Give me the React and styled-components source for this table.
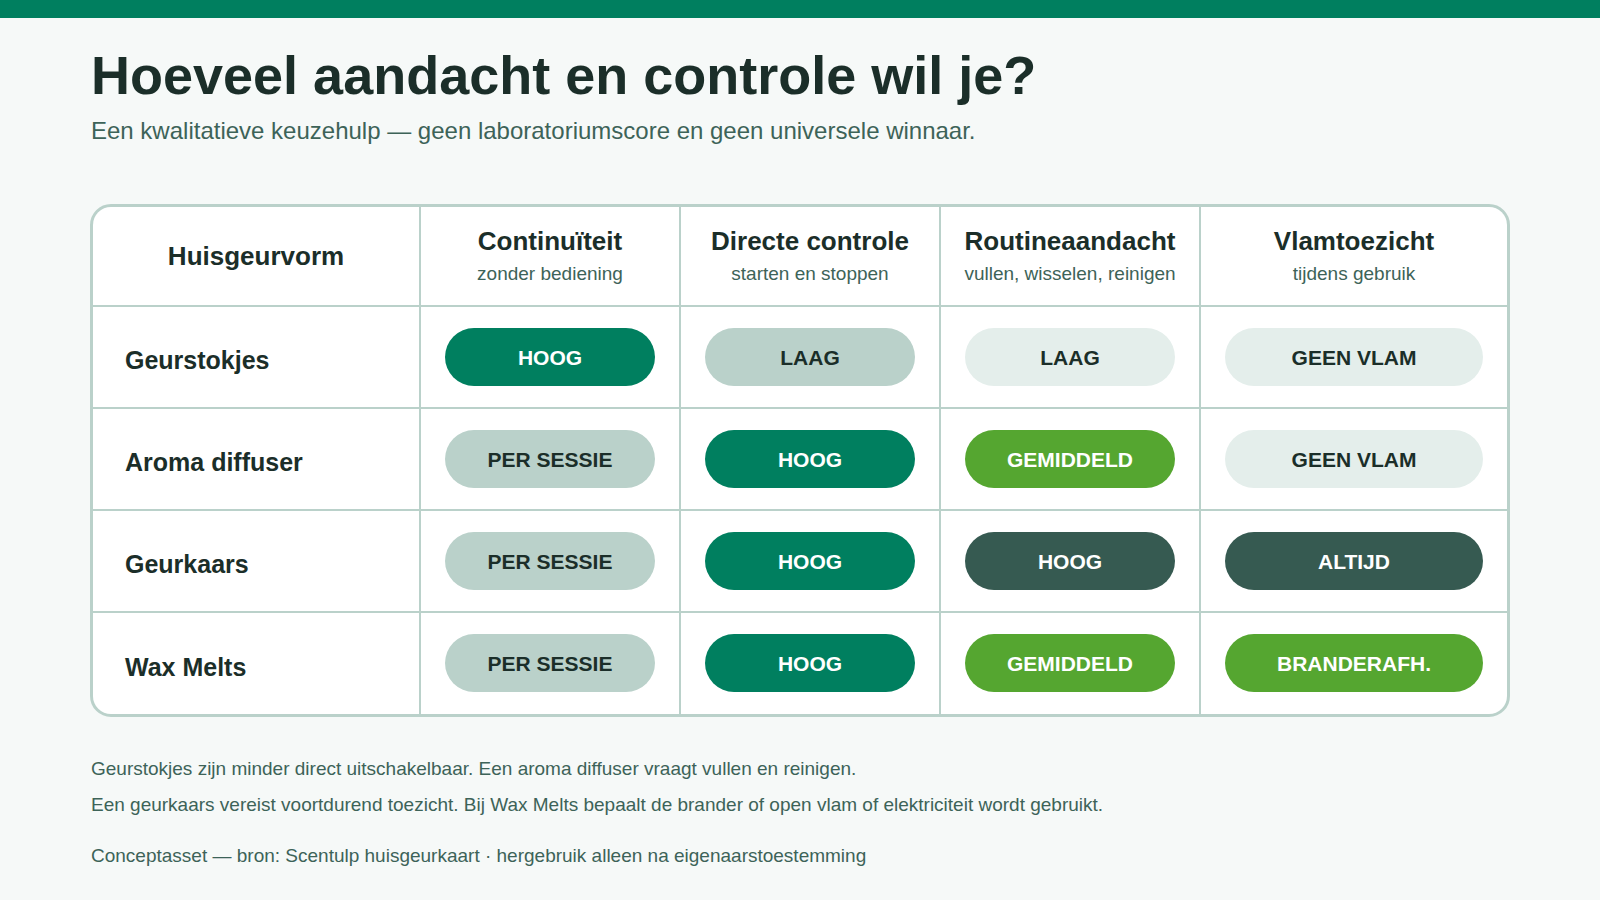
import React from "react";
import styled, { createGlobalStyle } from "styled-components";

const Global = createGlobalStyle`
  html, body { margin: 0; padding: 0; background: #f6f9f8; }
  body { font-family: "Liberation Sans", Arial, sans-serif; color: #1b2e29; }
  * { box-sizing: border-box; }
`;

const TopBar = styled.div`
  height: 18px;
  background: #007f5f;
`;

const Main = styled.main`
  padding: 26px 90px 0 90px;
`;

const Title = styled.h1`
  margin: 0 0 0 1px;
  font-size: 54px;
  line-height: 62px;
  font-weight: 700;
  color: #1b2e29;
`;

const Subtitle = styled.p`
  margin: 11px 0 0 1px;
  font-size: 24px;
  line-height: 28px;
  color: #3d6358;
`;

const Table = styled.div`
  margin-top: 59px;
  display: grid;
  grid-template-columns: 326px 258px 258px 258px 1fr;
  grid-template-rows: 98px repeat(3, 100px) 101px;
  gap: 2px;
  background: #bad1ca;
  border: 3px solid #bad1ca;
  border-radius: 21px;
  overflow: hidden;
`;

const HeadCell = styled.div`
  background: #ffffff;
  display: flex;
  flex-direction: column;
  align-items: center;
  justify-content: center;
  text-align: center;
  padding-bottom: 1px;
`;

const HeadTitle = styled.div`
  font-size: 26px;
  line-height: 30px;
  font-weight: 700;
  color: #1b2e29;
`;

const HeadSub = styled.div`
  margin-top: 7px;
  font-size: 19px;
  line-height: 22px;
  color: #3d6358;
`;

const RowLabel = styled.div`
  background: #ffffff;
  display: flex;
  align-items: center;
  padding-left: 32px;
  padding-top: 7px;
  font-size: 25px;
  font-weight: 700;
  color: #1b2e29;
`;

const Cell = styled.div`
  background: #ffffff;
  display: flex;
  align-items: center;
  padding: 0 24px 1px;
`;

const tones = {
  strong: { bg: "#007f5f", fg: "#ffffff" },
  muted: { bg: "#bad1ca", fg: "#1b2e29" },
  faint: { bg: "#e4eeeb", fg: "#1b2e29" },
  lime: { bg: "#55a630", fg: "#ffffff" },
  slate: { bg: "#365a51", fg: "#ffffff" },
};

const Pill = styled.div`
  width: 100%;
  height: 58px;
  padding-top: 2px;
  border-radius: 29px;
  display: flex;
  align-items: center;
  justify-content: center;
  font-size: 21px;
  font-weight: 700;
  text-transform: uppercase;
  background: ${(p) => tones[p.$tone].bg};
  color: ${(p) => tones[p.$tone].fg};
`;

const Notes = styled.div`
  margin-top: 41px;
  margin-left: 1px;
  font-size: 19px;
  line-height: 22px;
  color: #3d6358;
`;

const Note = styled.p`
  margin: 0 0 14px;
`;

const Credit = styled.p`
  margin: 29px 0 0 1px;
  font-size: 19px;
  line-height: 22px;
  color: #3d6358;
`;

const columns = [
  { title: "Continuïteit", sub: "zonder bediening" },
  { title: "Directe controle", sub: "starten en stoppen" },
  { title: "Routineaandacht", sub: "vullen, wisselen, reinigen" },
  { title: "Vlamtoezicht", sub: "tijdens gebruik" },
];

const rows = [
  {
    name: "Geurstokjes",
    cells: [
      ["Hoog", "strong"],
      ["Laag", "muted"],
      ["Laag", "faint"],
      ["Geen vlam", "faint"],
    ],
  },
  {
    name: "Aroma diffuser",
    cells: [
      ["Per sessie", "muted"],
      ["Hoog", "strong"],
      ["Gemiddeld", "lime"],
      ["Geen vlam", "faint"],
    ],
  },
  {
    name: "Geurkaars",
    cells: [
      ["Per sessie", "muted"],
      ["Hoog", "strong"],
      ["Hoog", "slate"],
      ["Altijd", "slate"],
    ],
  },
  {
    name: "Wax Melts",
    cells: [
      ["Per sessie", "muted"],
      ["Hoog", "strong"],
      ["Gemiddeld", "lime"],
      ["Branderafh.", "lime"],
    ],
  },
];

export default function App() {
  return (
    <>
      <Global />
      <TopBar />
      <Main>
        <Title>Hoeveel aandacht en controle wil je?</Title>
        <Subtitle>
          Een kwalitatieve keuzehulp — geen laboratoriumscore en geen universele winnaar.
        </Subtitle>
        <Table>
          <HeadCell>
            <HeadTitle>Huisgeurvorm</HeadTitle>
          </HeadCell>
          {columns.map((c) => (
            <HeadCell key={c.title}>
              <HeadTitle>{c.title}</HeadTitle>
              <HeadSub>{c.sub}</HeadSub>
            </HeadCell>
          ))}
          {rows.map((r) => (
            <React.Fragment key={r.name}>
              <RowLabel>{r.name}</RowLabel>
              {r.cells.map(([label, tone], i) => (
                <Cell key={i}>
                  <Pill $tone={tone}>{label}</Pill>
                </Cell>
              ))}
            </React.Fragment>
          ))}
        </Table>
        <Notes>
          <Note>
            Geurstokjes zijn minder direct uitschakelbaar. Een aroma diffuser vraagt vullen en reinigen.
          </Note>
          <Note>
            Een geurkaars vereist voortdurend toezicht. Bij Wax Melts bepaalt de brander of open vlam of elektriciteit wordt gebruikt.
          </Note>
        </Notes>
        <Credit>
          Conceptasset — bron: Scentulp huisgeurkaart · hergebruik alleen na eigenaarstoestemming
        </Credit>
      </Main>
    </>
  );
}
